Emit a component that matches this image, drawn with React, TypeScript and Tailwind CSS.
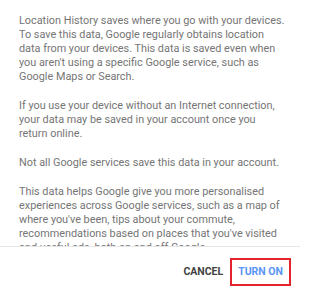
import React from "react";

export default function App() {
  return (
    <div className="w-[300px] h-[297px] bg-white flex flex-col overflow-hidden" style={{ fontFamily: "Roboto, 'Noto Sans', sans-serif" }}>
      <div className="h-[246px] overflow-hidden pt-[14px] pl-[19px] pr-[14px] text-[10.85px] leading-[14px] text-[#757575] flex flex-col gap-[15px] shrink-0">
        <p>
          Location History saves where you go with your devices. To save this data, Google regularly obtains location data from your devices. This data is saved even when you aren't using a specific Google service, such as Google Maps or Search.
        </p>
        <p>
          If you use your device without an Internet connection, your data may be saved in your account once you return online.
        </p>
        <p>Not all Google services save this data in your account.</p>
        <p>
          This data helps Google give you more personalised experiences across Google services, such as a map of where you've been, tips about your commute, recommendations based on places that you've visited and useful ads, both on and off Google.
        </p>
      </div>
      <div className="border-t border-[#e6e6e6] flex-1 flex items-start justify-end pr-[9px] pt-[11px] gap-[7px]">
        <button className="h-[28px] leading-[28px] text-[10.5px] font-bold text-[#424242]">CANCEL</button>
        <button className="h-[28px] leading-[24px] px-[6px] border-2 border-[#e3242b] text-[10.5px] font-bold text-[#5a95f5]">TURN ON</button>
      </div>
    </div>
  );
}
